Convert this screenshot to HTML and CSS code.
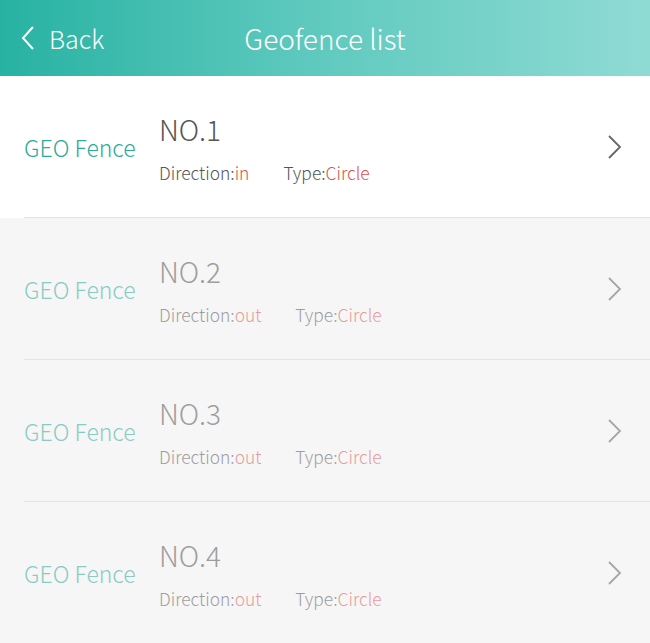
FILE: index.html
```html
<!DOCTYPE html>
<html>
<head>
<meta charset="utf-8">
<link rel="stylesheet" href="styles.css">
</head>
<body>
<header class="topbar">
  <div class="back">
    <svg class="back-icon" width="14" height="24" viewBox="0 0 14 24"><polyline points="12,1 2,12 12,23" fill="none" stroke="#fff" stroke-width="2"/></svg>
    <span>Back</span>
  </div>
  <div class="title">Geofence list</div>
</header>
<main class="list">
  <div class="row active">
    <div class="label">GEO Fence</div>
    <div class="info">
      <div class="no">NO.1</div>
      <div class="meta"><span class="dir">Direction:<em>in</em></span><span class="type">Type:<em>Circle</em></span></div>
    </div>
    <svg class="chev" width="14" height="24" viewBox="0 0 14 24"><polyline points="1,1 12,12 1,23" fill="none" stroke="#666" stroke-width="1.8"/></svg>
  </div>
  <div class="row">
    <div class="label">GEO Fence</div>
    <div class="info">
      <div class="no">NO.2</div>
      <div class="meta"><span class="dir">Direction:<em>out</em></span><span class="type">Type:<em>Circle</em></span></div>
    </div>
    <svg class="chev" width="14" height="24" viewBox="0 0 14 24"><polyline points="1,1 12,12 1,23" fill="none" stroke="#666" stroke-width="1.8"/></svg>
  </div>
  <div class="row">
    <div class="label">GEO Fence</div>
    <div class="info">
      <div class="no">NO.3</div>
      <div class="meta"><span class="dir">Direction:<em>out</em></span><span class="type">Type:<em>Circle</em></span></div>
    </div>
    <svg class="chev" width="14" height="24" viewBox="0 0 14 24"><polyline points="1,1 12,12 1,23" fill="none" stroke="#666" stroke-width="1.8"/></svg>
  </div>
  <div class="row">
    <div class="label">GEO Fence</div>
    <div class="info">
      <div class="no">NO.4</div>
      <div class="meta"><span class="dir">Direction:<em>out</em></span><span class="type">Type:<em>Circle</em></span></div>
    </div>
    <svg class="chev" width="14" height="24" viewBox="0 0 14 24"><polyline points="1,1 12,12 1,23" fill="none" stroke="#666" stroke-width="1.8"/></svg>
  </div>
</main>
</body>
</html>
```
FILE: styles.css
```css
* { box-sizing: border-box; }
html, body { margin: 0; padding: 0; }
body {
  width: 650px;
  height: 643px;
  overflow: hidden;
  background: #f6f6f6;
  font-family: "Noto Sans CJK SC", "Noto Sans", sans-serif;
  font-weight: 300;
}
.topbar {
  position: relative;
  height: 76px;
  background: linear-gradient(90deg, #27b2a2 0%, #5cc8bd 45%, #8fdbd4 100%);
  display: flex;
  align-items: center;
  justify-content: center;
  color: #fff;
}
.back {
  position: absolute;
  left: 21px;
  top: 0;
  height: 76px;
  display: flex;
  align-items: center;
  gap: 14px;
  font-size: 25px;
}
.title {
  font-size: 28px;
}
.list { background: #f6f6f6; }
.row {
  height: 142px;
  display: flex;
  align-items: center;
  padding-left: 24px;
  padding-right: 28px;
  position: relative;
}
.row::after {
  content: "";
  position: absolute;
  left: 24px;
  right: 0;
  bottom: 0;
  height: 1px;
  background: #e3e3e3;
}
.row.active { background: #fff; }
.row:not(.active) > * { opacity: 0.55; }
.label {
  width: 135px;
  font-size: 23px;
  color: #2eaa9b;
}
.info {
  flex: 1;
  display: flex;
  flex-direction: column;
  color: #555;
  padding-top: 2px;
}
.no {
  font-size: 28px;
  line-height: 34px;
}
.meta {
  margin-top: 16px;
  font-size: 17.4px;
  line-height: 22px;
  display: flex;
  gap: 34px;
}
.meta em {
  font-style: normal;
  color: #d9534f;
}
.chev { display: block; margin-left: auto; }
```
